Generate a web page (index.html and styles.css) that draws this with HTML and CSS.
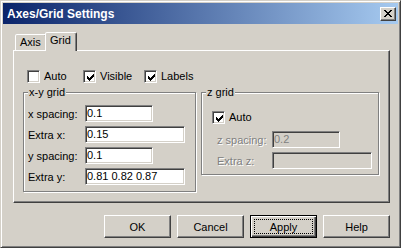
FILE: index.html
```html
<!DOCTYPE html>
<html>
<head>
<meta charset="utf-8">
<link rel="stylesheet" href="styles.css">
</head>
<body>
<div class="window">
  <div class="titlebar">
    <span class="title">Axes/Grid Settings</span>
    <span class="close"><svg width="8" height="7" viewBox="0 0 8 7" shape-rendering="crispEdges"><path fill="#000" d="M0 0h2v1h-2z M6 0h2v1h-2z M1 1h2v1h-2z M5 1h2v1h-2z M2 2h4v1h-4z M3 3h2v1h-2z M2 4h4v1h-4z M1 5h2v1h-2z M5 5h2v1h-2z M0 6h2v1h-2z M6 6h2v1h-2z"/></svg></span>
  </div>
  <div class="body">
    <div class="tabs">
      <div class="tab axis">Axis</div>
      <div class="tab grid active">Grid</div>
    </div>
    <div class="panel">
      <div class="checkrow">
        <label class="check w-auto"><span class="box"></span>Auto</label>
        <label class="check w-visible"><span class="box"><svg width="7" height="7" viewBox="0 0 7 7" shape-rendering="crispEdges"><path fill="#000" d="M6 0h1v3h-1z M5 1h1v3h-1z M4 2h1v3h-1z M3 3h1v3h-1z M2 4h1v3h-1z M1 3h1v3h-1z M0 2h1v3h-1z"/></svg></span>Visible</label>
        <label class="check"><span class="box"><svg width="7" height="7" viewBox="0 0 7 7" shape-rendering="crispEdges"><path fill="#000" d="M6 0h1v3h-1z M5 1h1v3h-1z M4 2h1v3h-1z M3 3h1v3h-1z M2 4h1v3h-1z M1 3h1v3h-1z M0 2h1v3h-1z"/></svg></span>Labels</label>
      </div>
      <div class="groups">
        <div class="group xy">
          <span class="legend">x-y grid</span>
          <div class="rows">
            <div class="row"><span class="lbl">x spacing:</span><span class="input short">0.1</span></div>
            <div class="row"><span class="lbl">Extra x:</span><span class="input long">0.15</span></div>
            <div class="row"><span class="lbl">y spacing:</span><span class="input short">0.1</span></div>
            <div class="row"><span class="lbl">Extra y:</span><span class="input long">0.81 0.82 0.87</span></div>
          </div>
        </div>
        <div class="group z">
          <span class="legend">z grid</span>
          <label class="check zauto"><span class="box"><svg width="7" height="7" viewBox="0 0 7 7" shape-rendering="crispEdges"><path fill="#000" d="M6 0h1v3h-1z M5 1h1v3h-1z M4 2h1v3h-1z M3 3h1v3h-1z M2 4h1v3h-1z M1 3h1v3h-1z M0 2h1v3h-1z"/></svg></span>Auto</label>
          <div class="rows zrows">
            <div class="row"><span class="lbl zl disabled">z spacing:</span><span class="input short off">0.2</span></div>
            <div class="row"><span class="lbl zl disabled">Extra z:</span><span class="input long off"></span></div>
          </div>
        </div>
      </div>
    </div>
    <div class="buttons">
      <span class="btn">OK</span>
      <span class="btn">Cancel</span>
      <span class="btn default"><span class="focus">Apply</span></span>
      <span class="btn">Help</span>
    </div>
  </div>
</div>
</body>
</html>
```

FILE: styles.css
```css
* { box-sizing: border-box; }
body {
  margin: 0;
  font: 11px "Liberation Sans", Arial, sans-serif;
  color: #000;
  background: #d4d0c8;
}
.window {
  width: 401px;
  height: 248px;
  background: #d4d0c8;
  border: 1px solid;
  border-color: #d4d0c8 #404040 #404040 #d4d0c8;
  box-shadow: inset 1px 1px #fff, inset -1px -1px #808080;
  padding: 2px;
  display: flex;
  flex-direction: column;
}
.titlebar {
  height: 21px;
  flex: none;
  background: linear-gradient(to right, #0a246a, #a6caf0);
  display: flex;
  align-items: center;
  padding: 0 2px 0 4px;
  color: #fff;
  font-weight: bold;
  font-size: 12px;
}
.title { flex: 1; }
.close {
  width: 16px;
  height: 14px;
  background: #d4d0c8;
  border: 1px solid;
  border-color: #fff #404040 #404040 #fff;
  box-shadow: inset -1px -1px #808080;
  display: flex;
  align-items: center;
  justify-content: center;
}
.close svg { display: block; margin-left: -1px; }
.body {
  flex: 1;
  padding: 8px 0 0 10px;
  display: flex;
  flex-direction: column;
}
.tabs {
  display: flex;
  align-items: flex-end;
  height: 18px;
  margin-left: 2px;
  position: relative;
  z-index: 1;
}
.tab {
  height: 16px;
  border: 1px solid;
  border-bottom: none;
  border-color: #fff #404040 transparent #fff;
  box-shadow: inset -1px 0 #808080;
  border-radius: 2px 2px 0 0;
  background: #d4d0c8;
  padding-left: 4px;
  line-height: 14px;
}
.tab.axis { width: 32px; }
.tab.grid {
  width: 32px;
  margin-left: -2px;
  height: 19px;
  margin-bottom: -1px;
  line-height: 15px;
  position: relative;
  z-index: 2;
}
.panel {
  width: 377px;
  height: 153px;
  border: 1px solid;
  border-color: #fff #404040 #404040 #fff;
  box-shadow: inset -1px -1px #808080;
  padding: 19px 0 0 9px;
}
.checkrow {
  display: flex;
  margin-left: 4px;
  height: 13px;
}
.check {
  display: flex;
  align-items: center;
  gap: 4px;
  line-height: 13px;
}
.w-auto { width: 56px; }
.w-visible { width: 61px; }
.box {
  width: 13px;
  height: 13px;
  background: #fff;
  border: 1px solid;
  border-color: #808080 #fff #fff #808080;
  box-shadow: inset 1px 1px #404040, inset -1px -1px #d4d0c8;
  display: flex;
  align-items: center;
  justify-content: center;
}
.box svg { display: block; margin: 1px 0 0 1px; }
.groups {
  display: flex;
  align-items: flex-start;
  gap: 5px;
  margin-top: 9px;
}
.group {
  border: 1px solid #808080;
  box-shadow: inset 1px 1px #fff, 1px 1px #fff;
  display: flex;
  flex-direction: column;
  align-items: flex-start;
}
.group.xy { width: 173px; height: 100px; padding-left: 4px; }
.group.z { width: 178px; height: 83px; padding-left: 10px; }
.legend {
  margin: -7px 0 0 0;
  padding: 0 1px;
  background: #d4d0c8;
  line-height: 13px;
}
.group.z .legend { margin-left: -6px; }
.rows {
  display: flex;
  flex-direction: column;
  gap: 4px;
  margin-top: 6px;
}
.row {
  display: flex;
  align-items: center;
  height: 17px;
}
.lbl { width: 57px; }
.zl { width: 55px; }
.disabled { color: #808080; text-shadow: 1px 1px #fff; }
.input {
  height: 17px;
  background: #fff;
  border: 1px solid;
  border-color: #808080 #fff #fff #808080;
  box-shadow: inset 1px 1px #404040, inset -1px -1px #d4d0c8;
  padding: 0 0 0 1px;
  line-height: 15px;
}
.input.short { width: 68px; }
.input.long { width: 100px; }
.input.off { background: #d4d0c8; color: #808080; }
.zauto { margin-top: 12px; }
.zrows { margin: 7px 0 0 5px; }
.buttons {
  display: flex;
  justify-content: flex-end;
  gap: 6px;
  width: 377px;
  margin-top: 12px;
}
.btn {
  width: 67px;
  height: 23px;
  border: 1px solid;
  border-color: #fff #404040 #404040 #fff;
  box-shadow: inset -1px -1px #808080;
  display: flex;
  align-items: center;
  justify-content: center;
  padding-top: 1px;
}
.btn.default {
  border-color: #000;
  box-shadow: inset 1px 1px #fff, inset -1px -1px #404040, inset -2px -2px #808080;
  padding: 3px 3px 3px 3px;
  align-items: stretch;
}
.focus {
  flex: 1;
  border: 1px dotted #000;
  display: flex;
  align-items: center;
  justify-content: center;
  padding-top: 1px;
}
```
